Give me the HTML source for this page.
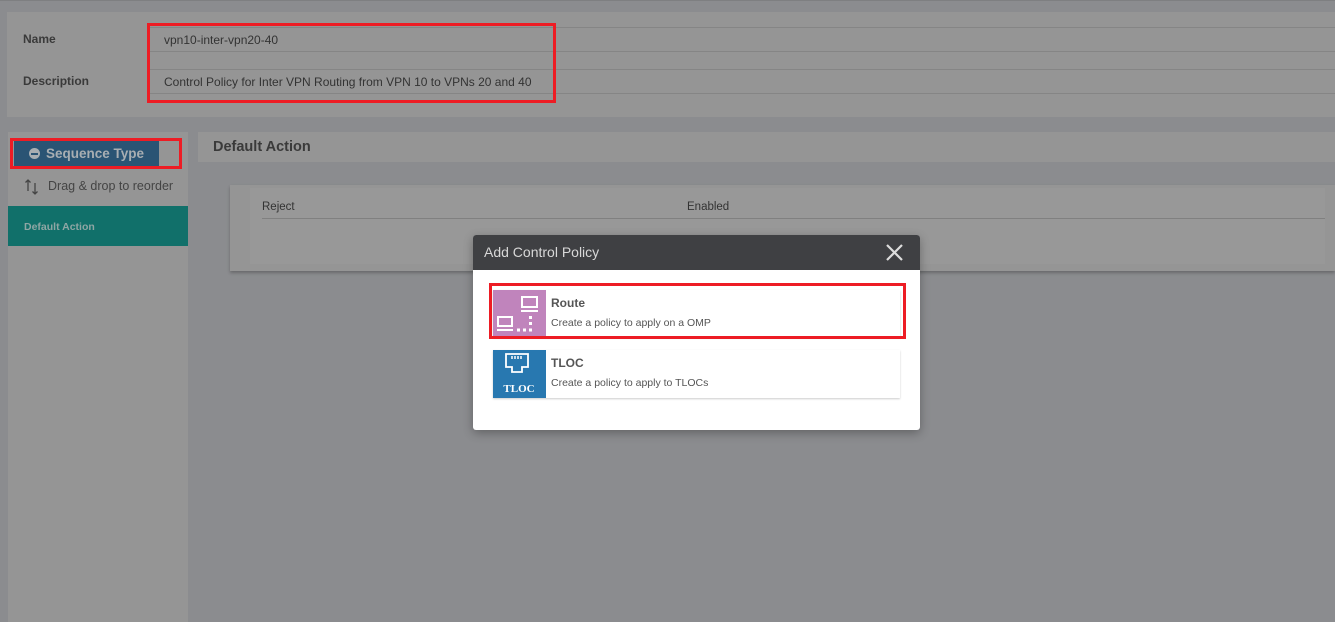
<!DOCTYPE html>
<html><head><meta charset="utf-8"><style>
*{margin:0;padding:0;box-sizing:border-box}
body{width:1335px;height:622px;overflow:hidden;background:#8b8c8f;font-family:"Liberation Sans",sans-serif;position:relative;color:#3a3a3a}
.a{position:absolute}
.panel{background:#959595}
.lbl{font-size:12px;font-weight:bold;color:#3a3a3a}
.inp{border:1px solid #858585;border-right:none;font-size:12px;color:#333;padding:0 15px;line-height:24px}
.red{border:3px solid #ed1c24}
</style></head><body>
<div class="a" style="left:0;top:0;width:1335px;height:1px;background:#7e7f81"></div>
<div class="a panel" style="left:7px;top:12px;width:1328px;height:105px"></div>
<div class="a lbl" style="left:23px;top:32px">Name</div>
<div class="a lbl" style="left:23px;top:74px">Description</div>
<div class="a inp" style="left:148px;top:27px;width:1187px;height:25px">vpn10-inter-vpn20-40</div>
<div class="a inp" style="left:148px;top:69px;width:1187px;height:25px">Control Policy for Inter VPN Routing from VPN 10 to VPNs 20 and 40</div>
<div class="a red" style="left:147px;top:23px;width:409px;height:80px"></div>

<div class="a panel" style="left:8px;top:132px;width:180px;height:490px"></div>
<div class="a" style="left:14px;top:141px;width:145px;height:25px;background:#2a5474;color:#a8aeb2;font-weight:bold;font-size:13.5px;line-height:25px;text-align:center"><span style="display:inline-block;width:11px;height:11px;border-radius:50%;background:#a8aeb2;vertical-align:-1px;margin-right:6px;position:relative"><span style="position:absolute;left:2px;top:4.5px;width:7px;height:2px;background:#2a5474"></span></span>Sequence Type</div>
<div class="a red" style="left:10px;top:138px;width:172px;height:31px"></div>
<svg class="a" style="left:24px;top:177px" width="16" height="20" viewBox="0 0 16 20" fill="none" stroke="#444" stroke-width="1.3"><path d="M4 14V3M1.5 5.5L4 3l2.5 2.5M11 6v11M8.5 14.5L11 17l2.5-2.5"/></svg>
<div class="a" style="left:48px;top:179px;font-size:12.5px;color:#444">Drag &amp; drop to reorder</div>
<div class="a" style="left:8px;top:206px;width:180px;height:40px;background:#11706a;color:#8fa6a4;font-size:10.5px;font-weight:bold;line-height:42px;padding-left:16px">Default Action</div>

<div class="a panel" style="left:198px;top:132px;width:1137px;height:30px;font-size:14.5px;font-weight:bold;color:#3a3a3a;line-height:30px;padding-left:15px">Default Action</div>
<div class="a panel" style="left:230px;top:185px;width:1105px;height:86px;box-shadow:0 2px 3px rgba(0,0,0,.25)"></div>
<div class="a" style="left:250px;top:188px;width:1075px;height:76px;background:#989898"></div>
<div class="a" style="left:262px;top:201px;font-size:11.5px;color:#333">Reject</div>
<div class="a" style="left:687px;top:201px;font-size:11.5px;color:#333">Enabled</div>
<div class="a" style="left:262px;top:218px;width:1063px;height:1px;background:#808080"></div>

<div class="a" style="left:473px;top:235px;width:447px;height:195px;background:#fff;border-radius:3px;box-shadow:0 3px 10px rgba(0,0,0,.3)"></div>
<div class="a" style="left:473px;top:235px;width:447px;height:35px;background:#3f4043;border-radius:3px 3px 0 0;color:#d8d8d8;font-size:14px;line-height:35px;padding-left:11px">Add Control Policy</div>
<svg class="a" style="left:886px;top:244px" width="17" height="17" viewBox="0 0 17 17" stroke="#ddd" stroke-width="2.2"><path d="M1 1L16 16M16 1L1 16"/></svg>

<div class="a" style="left:493px;top:290px;width:407px;height:47px;background:#fff;box-shadow:0 1px 2px rgba(0,0,0,.2)"></div>
<div class="a" style="left:493px;top:290px;width:53px;height:47px;background:#c084bc">
<svg width="53" height="47" viewBox="0 0 53 47" fill="none" stroke="#fff" stroke-width="2"><rect x="29" y="7" width="15" height="10"/><line x1="28" y1="21" x2="45" y2="21"/><rect x="5" y="27" width="14" height="9"/><line x1="4" y1="40" x2="20" y2="40"/><g fill="#fff" stroke="none"><rect x="24" y="38.5" width="3" height="3"/><rect x="30" y="38.5" width="3" height="3"/><rect x="36" y="38.5" width="3" height="3"/><rect x="36" y="32" width="3" height="3"/><rect x="36" y="26" width="3" height="3"/></g></svg></div>
<div class="a" style="left:551px;top:296px;font-size:12px;font-weight:bold;color:#555">Route</div>
<div class="a" style="left:551px;top:317px;font-size:10.5px;color:#555">Create a policy to apply on a OMP</div>
<div class="a red" style="left:489px;top:283px;width:417px;height:56px"></div>

<div class="a" style="left:493px;top:350px;width:407px;height:48px;background:#fff;box-shadow:0 1px 2px rgba(0,0,0,.2)"></div>
<div class="a" style="left:493px;top:350px;width:53px;height:48px;background:#2878b0">
<svg width="53" height="48" viewBox="0 0 53 48" fill="none" stroke="#fff" stroke-width="1.8"><path d="M13 4h22v13h-6v5h-10v-5h-6z"/><g stroke-width="1.5"><line x1="19" y1="6" x2="19" y2="9"/><line x1="22" y1="6" x2="22" y2="9"/><line x1="25" y1="6" x2="25" y2="9"/><line x1="28" y1="6" x2="28" y2="9"/></g><text x="26" y="42" fill="#fff" stroke="none" font-family="Liberation Serif,serif" font-size="11" font-weight="bold" text-anchor="middle">TLOC</text></svg></div>
<div class="a" style="left:551px;top:356px;font-size:12px;font-weight:bold;color:#555">TLOC</div>
<div class="a" style="left:551px;top:377px;font-size:10.5px;color:#555">Create a policy to apply to TLOCs</div>
</body></html>
